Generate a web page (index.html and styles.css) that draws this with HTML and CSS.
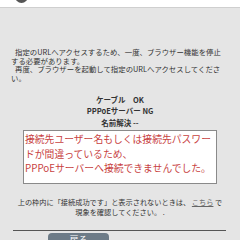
FILE: index.html
```html
<!DOCTYPE html>
<html lang="ja">
<head>
    <meta charset="UTF-8">
    <meta name="viewport" content="width=device-width, initial-scale=1.0">
    <title>接続確認</title>
    <link rel="stylesheet" href="styles.css">
</head>
<body>

    <!-- ヘッダー -->
    <header class="topbar">
        <span class="logo"></span>
    </header>

    <main class="content">
        <!-- 案内文 -->
        <div class="notice">
            <p>指定のURLへアクセスするため、一度、ブラウザー機能を停止する必要があります。</p>
            <p>再度、ブラウザーを起動して指定のURLへアクセスしてくださ<br>い。</p>
        </div>

        <!-- 状態 -->
        <div class="status">
            <p>ケーブル　OK</p>
            <p>PPPoEサーバー NG</p>
            <p>名前解決 --</p>
        </div>

        <!-- 結果 -->
        <div class="result">
            接続先ユーザー名もしくは接続先パスワードが間違っているため、<br>
            PPPoEサーバーへ接続できませんでした。
        </div>

        <p class="hint">上の枠内に「接続成功です」と表示されないときは、 <a href="#">こちら</a> で<br>現象を確認してください。 .</p>

        <hr class="line">

        <button class="back-btn">戻る</button>
    </main>

</body>
</html>
```

FILE: styles.css
```css
body {
    margin: 0;
    padding: 0;
    height: 240px;
    overflow: hidden;
    background-color: #e5e5e5;
    font-family: "Noto Sans CJK JP", sans-serif;
    color: #333;
}

/* ヘッダー */
.topbar {
    height: 7px;
    background-color: #fff;
    border-bottom: 1px solid #cfcfcf;
    overflow: hidden;
    padding-left: 15px;
}

.logo {
    display: block;
    width: 13px;
    height: 13px;
    margin-top: -10px;
    border-radius: 50%;
    background-color: #555;
}

.content {
    padding: 40px 11px 0 11px;
}

/* 案内文 */
.notice {
    padding-right: 8px;
}

.notice p {
    margin: 0;
    font-size: 7.4px;
    line-height: 8.7px;
    text-indent: 4px;
}

/* 状態 */
.status {
    margin-top: 11px;
    text-align: center;
    font-weight: bold;
    font-size: 7.5px;
    line-height: 11.5px;
}

.status p {
    margin: 0;
}

/* 結果 */
.result {
    margin: 2px 12px 0;
    padding: 1px 1px 7px 1px;
    background-color: #fff;
    border: 1px solid #8a8a8a;
    color: #c8423f;
    font-size: 9.8px;
    line-height: 14.5px;
}

.hint {
    margin: 13px 0 0;
    text-align: center;
    font-size: 7.2px;
    line-height: 10.5px;
}

.hint a {
    color: #666;
}

.line {
    margin: 12px 3px 0 2px;
    border: 0;
    border-top: 1px solid #555;
}

.back-btn {
    display: block;
    width: 61px;
    height: 14px;
    margin: 2px 0 0 37px;
    padding: 0;
    border: none;
    border-radius: 4px;
    background-color: #6d7b87;
    color: #fff;
    font-family: "Noto Sans CJK JP", sans-serif;
    font-size: 9px;
}
```
